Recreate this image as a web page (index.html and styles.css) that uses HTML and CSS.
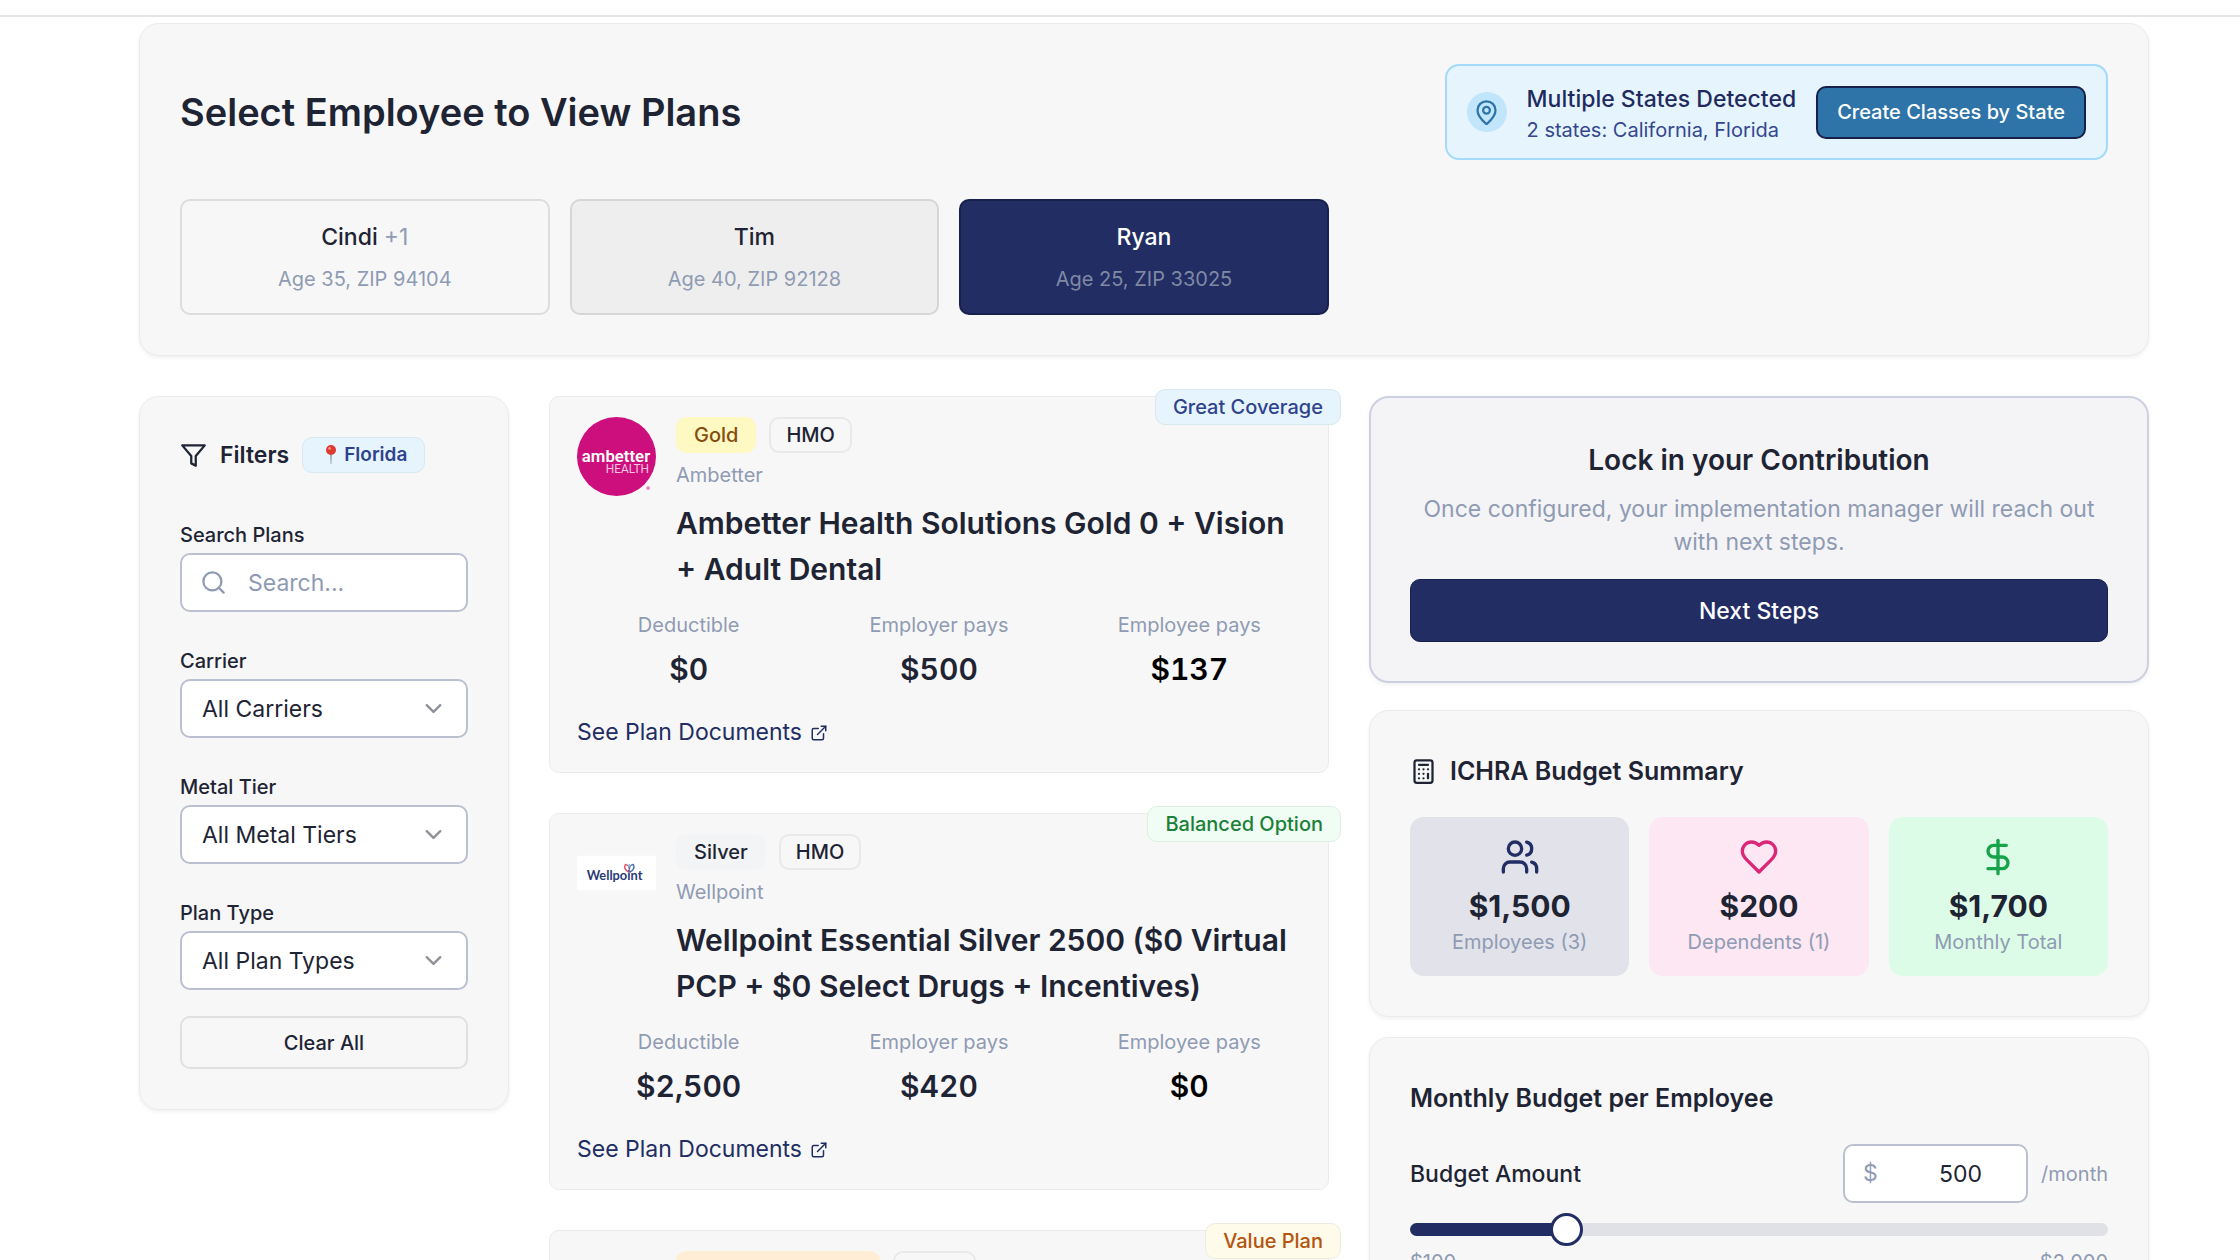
FILE: index.html
```html
<!DOCTYPE html>
<html lang="en">
<head>
    <meta charset="UTF-8">
    <meta name="viewport" content="width=device-width, initial-scale=1.0">
    <title>Select Employee to View Plans</title>

    <link rel="stylesheet" href="styles.css">
</head>
<body>

    <div class="topbar"></div>

    <main class="page">
        <section class="card header-card">
            <div class="header-row">
                <h1>Select Employee to View Plans</h1>
                <div class="states-banner">
                    <span class="states-icon">
                        <svg class="icon" viewBox="0 0 24 24"><path d="M20 10c0 4.993-5.539 10.193-7.399 11.799a1 1 0 0 1-1.202 0C9.539 20.193 4 14.993 4 10a8 8 0 0 1 16 0"/><circle cx="12" cy="10" r="3"/></svg>
                    </span>
                    <div class="states-text">
                        <p class="states-title">Multiple States Detected</p>
                        <p class="states-sub">2 states: California, Florida</p>
                    </div>
                    <button class="btn btn-blue">Create Classes by State</button>
                </div>
            </div>
            <div class="employees">
                <button class="employee">
                    <span class="employee-name">Cindi <span class="muted">+1</span></span>
                    <span class="employee-info">Age 35, ZIP 94104</span>
                </button>
                <button class="employee hovered">
                    <span class="employee-name">Tim</span>
                    <span class="employee-info">Age 40, ZIP 92128</span>
                </button>
                <button class="employee selected">
                    <span class="employee-name">Ryan</span>
                    <span class="employee-info">Age 25, ZIP 33025</span>
                </button>
            </div>
        </section>

        <div class="columns">
            <!-- Filters -->
            <aside class="card filters">
                <h2 class="filters-title">
                    <svg class="icon" viewBox="0 0 24 24"><path d="M22 3H2l8 9.46V19l4 2v-8.54L22 3z"/></svg>
                    Filters
                    <span class="badge badge-blue badge-state">
                        <svg class="pin" viewBox="0 0 10 20"><path d="M4.2 9h1.6L5.3 19h-.6z" fill="#8a8f98"/><circle cx="5" cy="5" r="5" fill="#dd3a32"/><circle cx="3.6" cy="3.4" r="1.4" fill="#f7938c"/></svg>
                        Florida
                    </span>
                </h2>
                <div class="fields">
                    <div class="field">
                        <label for="search">Search Plans</label>
                        <div class="control">
                            <svg class="icon search-icon" viewBox="0 0 24 24"><circle cx="11" cy="11" r="8"/><path d="m21 21-4.3-4.3"/></svg>
                            <input type="text" id="search" class="input search-input" placeholder="Search...">
                        </div>
                    </div>
                    <div class="field">
                        <label for="carrier">Carrier</label>
                        <div class="control">
                            <select id="carrier" class="input"><option>All Carriers</option></select>
                            <svg class="icon chevron" viewBox="0 0 24 24"><path d="m6 9 6 6 6-6"/></svg>
                        </div>
                    </div>
                    <div class="field">
                        <label for="tier">Metal Tier</label>
                        <div class="control">
                            <select id="tier" class="input"><option>All Metal Tiers</option></select>
                            <svg class="icon chevron" viewBox="0 0 24 24"><path d="m6 9 6 6 6-6"/></svg>
                        </div>
                    </div>
                    <div class="field">
                        <label for="type">Plan Type</label>
                        <div class="control">
                            <select id="type" class="input"><option>All Plan Types</option></select>
                            <svg class="icon chevron" viewBox="0 0 24 24"><path d="m6 9 6 6 6-6"/></svg>
                        </div>
                    </div>
                </div>
                <button class="btn btn-outline">Clear All</button>
            </aside>

            <!-- Plans -->
            <div class="plans">
                <article class="plan">
                    <span class="badge badge-blue ribbon">Great Coverage</span>
                    <div class="plan-head">
                        <div class="logo">
                            <svg viewBox="0 0 80 80">
                                <circle cx="40" cy="40" r="40" fill="#cd0f7d"/>
                                <text x="39.5" y="46" class="logo-ambetter" text-anchor="middle">ambetter</text>
                                <text x="73" y="57" class="logo-health" text-anchor="end">HEALTH</text>
                                <circle cx="72" cy="72" r="2" fill="#e98bc0"/>
                            </svg>
                        </div>
                        <div class="plan-info">
                            <div class="badges">
                                <span class="badge badge-gold">Gold</span>
                                <span class="badge badge-plain">HMO</span>
                            </div>
                            <p class="carrier">Ambetter</p>
                            <h3>Ambetter Health Solutions Gold 0 + Vision + Adult Dental</h3>
                        </div>
                    </div>
                    <dl class="stats">
                        <div><dt>Deductible</dt><dd>$0</dd></div>
                        <div><dt>Employer pays</dt><dd>$500</dd></div>
                        <div><dt>Employee pays</dt><dd class="black">$137</dd></div>
                    </dl>
                    <a href="#" class="docs">See Plan Documents
                        <svg class="icon" viewBox="0 0 24 24"><path d="M15 3h6v6"/><path d="M10 14 21 3"/><path d="M18 13v6a2 2 0 0 1-2 2H5a2 2 0 0 1-2-2V8a2 2 0 0 1 2-2h6"/></svg>
                    </a>
                </article>

                <article class="plan">
                    <span class="badge badge-green ribbon">Balanced Option</span>
                    <div class="plan-head">
                        <div class="logo">
                            <svg viewBox="0 0 80 80">
                                <rect x="0" y="22" width="80" height="35" fill="#fff"/>
                                <text x="38" y="47" class="logo-wellpoint" text-anchor="middle">Wellpoint</text>
                                <path d="M53 39c-4-2-6-5-4-8 2 0 4 2 4 5" fill="none" stroke="#e0506a" stroke-width="1.5"/>
                                <path d="M53 39c4-2 6-5 4-8-2 0-4 2-4 5" fill="none" stroke="#4a6fb5" stroke-width="1.5"/>
                                <path d="M53 30l1.500 2-1.500 2-1.500-2z" fill="#6fc3e8"/>
                            </svg>
                        </div>
                        <div class="plan-info">
                            <div class="badges">
                                <span class="badge badge-silver">Silver</span>
                                <span class="badge badge-plain">HMO</span>
                            </div>
                            <p class="carrier">Wellpoint</p>
                            <h3>Wellpoint Essential Silver 2500 ($0 Virtual PCP + $0 Select Drugs + Incentives)</h3>
                        </div>
                    </div>
                    <dl class="stats">
                        <div><dt>Deductible</dt><dd>$2,500</dd></div>
                        <div><dt>Employer pays</dt><dd>$420</dd></div>
                        <div><dt>Employee pays</dt><dd class="black">$0</dd></div>
                    </dl>
                    <a href="#" class="docs">See Plan Documents
                        <svg class="icon" viewBox="0 0 24 24"><path d="M15 3h6v6"/><path d="M10 14 21 3"/><path d="M18 13v6a2 2 0 0 1-2 2H5a2 2 0 0 1-2-2V8a2 2 0 0 1 2-2h6"/></svg>
                    </a>
                </article>

                <article class="plan">
                    <span class="badge badge-amber ribbon">Value Plan</span>
                    <div class="plan-head">
                        <div class="logo"></div>
                        <div class="plan-info">
                            <div class="badges">
                                <span class="badge badge-bronze">Expanded Bronze</span>
                                <span class="badge badge-plain">HMO</span>
                            </div>
                        </div>
                    </div>
                </article>
            </div>

            <!-- Budget -->
            <div class="budget">
                <section class="card lock">
                    <h2>Lock in your Contribution</h2>
                    <p>Once configured, your implementation manager will reach out with next steps.</p>
                    <button class="btn btn-navy">Next Steps</button>
                </section>

                <section class="card summary">
                    <h2 class="card-title">
                        <svg class="icon" viewBox="0 0 24 24"><rect width="16" height="20" x="4" y="2" rx="2"/><path d="M8 6h8M16 14v4M16 10h.01M12 10h.01M8 10h.01M12 14h.01M8 14h.01M12 18h.01M8 18h.01"/></svg>
                        ICHRA Budget Summary
                    </h2>
                    <div class="tiles">
                        <div class="tile tile-navy">
                            <svg class="icon" viewBox="0 0 24 24"><path d="M16 21v-2a4 4 0 0 0-4-4H6a4 4 0 0 0-4 4v2"/><circle cx="9" cy="7" r="4"/><path d="M22 21v-2a4 4 0 0 0-3-3.870"/><path d="M16 3.130a4 4 0 0 1 0 7.750"/></svg>
                            <strong>$1,500</strong>
                            <span>Employees (3)</span>
                        </div>
                        <div class="tile tile-pink">
                            <svg class="icon" viewBox="0 0 24 24"><path d="M19 14c1.490-1.460 3-3.210 3-5.500A5.500 5.500 0 0 0 16.500 3c-1.760 0-3 .5-4.500 2-1.500-1.500-2.740-2-4.500-2A5.500 5.500 0 0 0 2 8.500c0 2.300 1.500 4.050 3 5.500l7 7Z"/></svg>
                            <strong>$200</strong>
                            <span>Dependents (1)</span>
                        </div>
                        <div class="tile tile-green">
                            <svg class="icon" viewBox="0 0 24 24"><path d="M12 2v20"/><path d="M17 5H9.500a3.500 3.500 0 0 0 0 7h5a3.500 3.500 0 0 1 0 7H6"/></svg>
                            <strong>$1,700</strong>
                            <span>Monthly Total</span>
                        </div>
                    </div>
                </section>

                <section class="card monthly">
                    <h2 class="card-title">Monthly Budget per Employee</h2>
                    <div class="amount-row">
                        <label for="amount">Budget Amount</label>
                        <div class="amount">
                            <div class="control">
                                <span class="dollar">$</span>
                                <input type="text" id="amount" class="input amount-input" value="500">
                            </div>
                            <span class="per">/month</span>
                        </div>
                    </div>
                    <input type="range" class="slider" aria-label="Budget Amount" min="100" max="2000" step="50" value="500">
                    <div class="range-labels">
                        <span>$100</span>
                        <span>$2,000</span>
                    </div>
                </section>
            </div>
        </div>
    </main>

</body>
</html>
```

FILE: styles.css
```css
* {
    box-sizing: border-box;
}

body {
    margin: 0;
    height: 100vh;
    overflow: hidden;
    background: #fff;
    color: #1e2433;
    font-family: Inter, "Liberation Sans", sans-serif;
    font-size: 23px;
}

h1, h2, h3, p, dl, dd {
    margin: 0;
}

button, input, select {
    font-family: inherit;
    color: inherit;
}

.icon {
    width: 27px;
    height: 27px;
    fill: none;
    stroke: currentColor;
    stroke-width: 2;
    stroke-linecap: round;
    stroke-linejoin: round;
    flex-shrink: 0;
}

.topbar {
    height: 17px;
    border-bottom: 2px solid #e3e4e4;
}

.page {
    padding: 6px 91px 0 139px;
}

.card {
    background: #f7f7f7;
    border: 1px solid #ebebeb;
    border-radius: 20px;
    padding: 40px;
    box-shadow: 0 2px 4px rgba(0, 0, 0, 0.06);
}

.muted {
    color: #8f9bb3;
}

/* Header */
.header-card {
    display: flex;
    flex-direction: column;
    gap: 39px;
}

.header-row {
    display: flex;
    justify-content: space-between;
    align-items: center;
}

h1 {
    font-size: 38px;
    font-weight: 600;
    line-height: 48px;
}

.states-banner {
    display: flex;
    align-items: center;
    gap: 20px;
    padding: 14px 20px;
    background: #e6f5fd;
    border: 2px solid #a3dafa;
    border-radius: 14px;
}

.states-icon {
    display: flex;
    align-items: center;
    justify-content: center;
    width: 40px;
    height: 40px;
    border-radius: 50%;
    background: #c1e5fa;
    color: #2e74a8;
}

.states-text {
    padding-top: 3px;
}

.states-title {
    font-size: 23px;
    font-weight: 500;
    line-height: 33px;
    color: #1f2b5f;
}

.states-sub {
    margin-top: 1px;
    font-size: 20px;
    line-height: 27px;
    color: #34478f;
}

.btn {
    height: 53px;
    padding: 0 19px;
    border: 2px solid transparent;
    border-radius: 10px;
    font-size: 20px;
    font-weight: 500;
}

.btn-blue {
    background: #2e74a8;
    border-color: #16204a;
    color: #fff;
}

.btn-outline {
    background: transparent;
    border-color: #e0e0e1;
}

.btn-navy {
    height: 63px;
    background: #212d63;
    border: 1px solid #18214d;
    color: #fff;
    font-size: 23px;
}

.employees {
    display: grid;
    grid-template-columns: repeat(5, 1fr);
    gap: 20px;
}

.employee {
    display: flex;
    flex-direction: column;
    align-items: center;
    gap: 12px;
    padding: 20px;
    border: 2px solid #dcdddd;
    border-radius: 10px;
    background: #f7f7f7;
}

.employee.hovered {
    background: #eee;
    border-color: #d6d6d6;
}

.employee.selected {
    background: #212d63;
    border-color: #18214d;
    color: #fff;
}

.employee-name {
    font-size: 23px;
    font-weight: 500;
    line-height: 33px;
}

.employee-name .muted {
    font-weight: 400;
}

.employee-info {
    font-size: 20px;
    line-height: 27px;
    color: #8f9bb3;
}

.selected .employee-info {
    color: #8089a3;
}

.columns {
    display: grid;
    grid-template-columns: repeat(5, 1fr);
    gap: 40px;
    align-items: start;
    margin-top: 40px;
}

/* Badges */
.badge {
    display: inline-flex;
    align-items: center;
    height: 36px;
    padding: 0 17px;
    border: 1px solid transparent;
    border-radius: 10px;
    font-size: 20px;
    font-weight: 500;
    white-space: nowrap;
}

.badge-blue {
    background: #e6f5fd;
    border-color: #d8e8f0;
    color: #2f438d;
}

.badge-green {
    background: #f0fdf4;
    border-color: #e0eee5;
    color: #1b8039;
}

.badge-amber {
    background: #fffbeb;
    border-color: #f0ecdd;
    color: #b4540e;
}

.badge-gold {
    background: #fef8c3;
    color: #854d0e;
}

.badge-silver {
    background: #f3f4f6;
}

.badge-bronze {
    background: #ffedd5;
    color: #9a3412;
}

.badge-plain {
    padding: 0 15px;
    border: 2px solid #e9e9ea;
}

/* Filters */
.filters {
    display: flex;
    flex-direction: column;
}

.filters-title {
    display: flex;
    align-items: center;
    gap: 13px;
    margin-bottom: 48px;
    font-size: 23px;
    font-weight: 600;
    line-height: 36px;
}

.badge-state {
    gap: 8px;
    padding: 0 17px 0 23px;
    font-size: 19px;
    font-weight: 600;
}

.pin {
    width: 10px;
    height: 20px;
}

.fields {
    display: flex;
    flex-direction: column;
    gap: 35px;
}

.field {
    display: flex;
    flex-direction: column;
    gap: 4px;
}

.field label {
    font-size: 20px;
    font-weight: 500;
    line-height: 28px;
}

.control {
    position: relative;
}

.input {
    display: block;
    width: 100%;
    height: 59px;
    padding: 0 20px;
    appearance: none;
    background: #fff;
    border: 2px solid #bbc0d1;
    border-radius: 10px;
    font-size: 23px;
    outline: none;
}

.input::placeholder {
    color: #8f9bb3;
}

.search-input {
    padding-left: 66px;
}

.search-icon {
    position: absolute;
    left: 20px;
    top: 16px;
    color: #8f9bb3;
}

.chevron {
    position: absolute;
    right: 21px;
    top: 16px;
    opacity: 0.5;
    pointer-events: none;
}

.filters .btn {
    margin-top: 26px;
}

/* Plans */
.plans {
    grid-column: span 2;
    display: flex;
    flex-direction: column;
    gap: 40px;
}

.plan {
    position: relative;
    padding: 20px 27px 23px;
    background: #f7f7f7;
    border: 1px solid #ebebeb;
    border-radius: 10px;
}

.ribbon {
    position: absolute;
    top: -8px;
    right: -13px;
}

.plan-head {
    display: flex;
    gap: 20px;
}

.logo {
    width: 79px;
    flex-shrink: 0;
}

.logo svg {
    display: block;
    width: 100%;
}

.logo-ambetter {
    font: 600 17px Roboto, sans-serif;
    fill: #fff;
}

.logo-health {
    font: 400 12px Roboto, sans-serif;
    fill: #f6c6e1;
}

.logo-wellpoint {
    font: 700 13px Lato, sans-serif;
    fill: #2a3a78;
}

.badges {
    display: flex;
    gap: 13px;
}

.carrier {
    margin: 9px 0 11px;
    font-size: 20px;
    line-height: 27px;
    color: #8f9bb3;
}

h3 {
    font-size: 30px;
    font-weight: 600;
    line-height: 46px;
}

.stats {
    display: grid;
    grid-template-columns: repeat(3, 1fr);
    gap: 27px;
    margin: 20px 0 24px;
    text-align: center;
}

.stats dt {
    font-size: 20px;
    line-height: 27px;
    color: #8f9bb3;
}

.stats dd {
    margin-top: 7px;
    font-size: 30px;
    font-weight: 600;
    line-height: 46px;
    font-variant-numeric: tabular-nums;
}

.stats .black {
    color: #000;
}

.docs {
    display: inline-flex;
    align-items: center;
    gap: 8px;
    color: #212d63;
    font-size: 23px;
    line-height: 33px;
    text-decoration: none;
}

.docs .icon {
    width: 18px;
    height: 18px;
}

/* Budget */
.budget {
    grid-column: span 2;
    display: flex;
    flex-direction: column;
}

.lock {
    display: flex;
    flex-direction: column;
    padding: 39px;
    text-align: center;
    background: #f4f4f6;
    border: 2px solid #cdd0e0;
}

.lock h2 {
    font-size: 28px;
    font-weight: 600;
    line-height: 46px;
}

.lock p {
    margin: 10px 0 20px;
    font-size: 23px;
    line-height: 33px;
    color: #8f9bb3;
}

.summary {
    margin: 27px 0 20px;
}

.card-title {
    display: flex;
    align-items: center;
    gap: 13px;
    font-size: 25px;
    font-weight: 600;
    line-height: 40px;
}

.tiles {
    display: grid;
    grid-template-columns: repeat(3, 1fr);
    gap: 20px;
    margin-top: 26px;
}

.tile {
    display: flex;
    flex-direction: column;
    align-items: center;
    padding: 20px;
    border-radius: 14px;
}

.tile .icon {
    width: 40px;
    height: 40px;
}

.tile strong {
    margin-top: 6px;
    font-size: 30px;
    font-weight: 700;
    line-height: 46px;
}

.tile span {
    font-size: 20px;
    line-height: 27px;
    color: #8f9bb3;
}

.tile-navy {
    background: #e1e2ea;
}

.tile-navy .icon {
    color: #212d63;
}

.tile-pink {
    background: #fce7f3;
}

.tile-pink .icon {
    color: #db2777;
}

.tile-green {
    background: #dcfce7;
}

.tile-green .icon {
    color: #16a34a;
}

.amount-row {
    display: flex;
    justify-content: space-between;
    align-items: center;
    margin-top: 26px;
}

.amount-row label {
    font-size: 23px;
    font-weight: 500;
}

.amount {
    display: flex;
    align-items: center;
    gap: 13px;
}

.dollar {
    position: absolute;
    left: 20px;
    top: 0;
    line-height: 59px;
    color: #8f9bb3;
}

.amount-input {
    width: 185px;
    padding: 0 44px;
    text-align: right;
}

.per {
    font-size: 20px;
    color: #8f9bb3;
}

.slider {
    display: block;
    width: 100%;
    height: 33px;
    margin: 10px 0 3px;
    appearance: none;
    background: transparent;
}

.slider::-webkit-slider-runnable-track {
    height: 13px;
    border-radius: 7px;
    background: linear-gradient(to right, #212d63 22%, #e0e1e6 22%);
}

.slider::-webkit-slider-thumb {
    appearance: none;
    width: 33px;
    height: 33px;
    margin-top: -10px;
    border: 3px solid #212d63;
    border-radius: 50%;
    background: #fff;
}

.range-labels {
    display: flex;
    justify-content: space-between;
    font-size: 20px;
    line-height: 27px;
    color: #8f9bb3;
}
```
